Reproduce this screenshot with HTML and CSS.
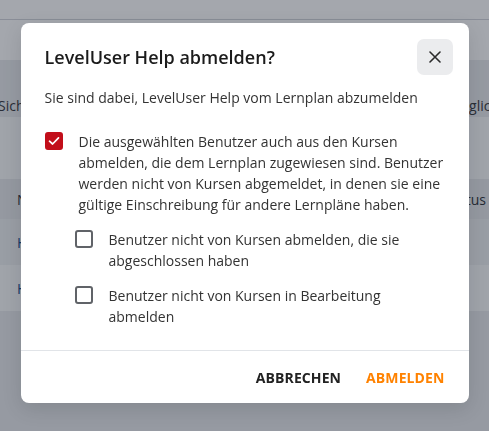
FILE: index.html
```html
<!DOCTYPE html>
<html lang="de">
<head>
    <meta charset="UTF-8" />
    <meta name="viewport" content="width=device-width, initial-scale=1.0" />
    <title>Lernplan</title>
    <link rel="stylesheet" href="styles.css">
</head>
<body>
    <div class="page">
        <div class="topbar"></div>
        <div class="spacer"></div>
        <div class="toolbar">
            <span class="toolbar-left">Sichtbarkeit</span>
            <span class="toolbar-right">Nicht möglich</span>
        </div>
        <div class="filters"></div>
        <div class="table-head">
            <span>Name</span>
            <span>Status</span>
        </div>
        <div class="table-row dark"><a href="#">Help Desk</a></div>
        <div class="table-row"><a href="#">Help Center</a></div>
    </div>

    <div class="backdrop">
        <div class="dialog" role="dialog" aria-labelledby="dialogTitle">
            <div class="dialog-header">
                <h2 id="dialogTitle">LevelUser Help abmelden?</h2>
                <button class="close-btn" aria-label="Schließen">
                    <svg width="12" height="12" viewBox="0 0 12 12">
                        <path d="M1 1 L11 11 M11 1 L1 11" stroke="#2b2b2b" stroke-width="1.6" stroke-linecap="round" />
                    </svg>
                </button>
            </div>
            <div class="dialog-body">
                <p class="intro">Sie sind dabei, LevelUser Help vom Lernplan abzumelden</p>

                <label class="option">
                    <span class="box checked">
                        <svg width="12" height="10" viewBox="0 0 12 10">
                            <path d="M1.5 5.2 L4.6 8 L10.5 1.8" fill="none" stroke="#fff" stroke-width="1.7" stroke-linecap="round" stroke-linejoin="round" />
                        </svg>
                    </span>
                    <span>Die ausgewählten Benutzer auch aus den Kursen abmelden, die dem Lernplan zugewiesen sind. Benutzer werden nicht von Kursen abgemeldet, in denen sie eine gültige Einschreibung für andere Lernpläne haben.</span>
                </label>

                <label class="option sub">
                    <span class="box"></span>
                    <span>Benutzer nicht von Kursen abmelden, die sie abgeschlossen haben</span>
                </label>

                <label class="option sub">
                    <span class="box"></span>
                    <span>Benutzer nicht von Kursen in Bearbeitung abmelden</span>
                </label>
            </div>
            <div class="dialog-footer">
                <button class="text-btn">Abbrechen</button>
                <button class="text-btn primary">Abmelden</button>
            </div>
        </div>
    </div>
</body>
</html>
```

FILE: styles.css
```css
* {
    margin: 0;
    padding: 0;
    box-sizing: border-box;
    font-family: 'Open Sans', 'Liberation Sans', sans-serif;
}

body {
    background: #e8eaed;
    color: #333;
    font-size: 14px;
    overflow: hidden;
    height: 431px;
}

/* page behind the dialog */
.topbar {
    height: 20px;
    background: #fff;
    border-bottom: 1px solid #d3d6db;
}

.spacer {
    height: 40px;
    background: #fff;
}

.toolbar {
    height: 57px;
    background: #e9ebee;
    display: flex;
    justify-content: space-between;
    align-items: flex-end;
    padding-bottom: 1px;
    line-height: 21px;
    color: #3a3d42;
}

.toolbar-left {
    margin-left: -2px;
}

.toolbar-right {
    margin-right: -10px;
}

.filters {
    height: 62px;
    background: #f9fafb;
}

.table-head {
    height: 40px;
    background: #e7e9ec;
    display: flex;
    justify-content: space-between;
    align-items: center;
    padding: 0 3px 0 17px;
    color: #34373d;
}

.table-row {
    height: 46px;
    background: #f9fafb;
    display: flex;
    align-items: center;
    padding-left: 17px;
}

.table-row.dark {
    background: #eef0f2;
}

.table-row a {
    color: #1d4f8c;
    text-decoration: none;
}

/* dialog */
.backdrop {
    position: fixed;
    inset: 0;
    background: rgba(17, 24, 39, 0.38);
    display: flex;
    justify-content: center;
    align-items: flex-start;
    padding-top: 23px;
}

.dialog {
    width: 448px;
    background: #fff;
    border-radius: 8px;
    box-shadow: 0 6px 20px rgba(0, 0, 0, 0.12);
}

.dialog-header {
    display: flex;
    justify-content: space-between;
    align-items: center;
    padding: 16px 16px 0 24px;
}

.dialog-header h2 {
    font-size: 18px;
    font-weight: 600;
    color: #1b1b1b;
    line-height: 27px;
}

.close-btn {
    width: 36px;
    height: 36px;
    border: none;
    border-radius: 7px;
    background: #ebecee;
    display: flex;
    align-items: center;
    justify-content: center;
    cursor: pointer;
}

.dialog-body {
    padding: 12px 24px 23px 24px;
    line-height: 21px;
}

.intro {
    margin-bottom: 23px;
}

.option {
    display: flex;
    align-items: flex-start;
    gap: 16px;
    margin-bottom: 14px;
}

.option:last-child {
    margin-bottom: 0;
}

.option.sub {
    padding-left: 30px;
}

.box {
    flex: none;
    width: 18px;
    height: 18px;
    margin-top: 1px;
    border: 2px solid #606368;
    border-radius: 3px;
    display: flex;
    align-items: center;
    justify-content: center;
}

.box.checked {
    background: #c20e1a;
    border-color: #c20e1a;
}

.dialog-footer {
    border-top: 1px solid #e1e4e8;
    height: 53px;
    display: flex;
    justify-content: flex-end;
    align-items: center;
    gap: 9px;
    padding: 0 16px;
}

.text-btn {
    background: none;
    border: none;
    padding: 6px 8px;
    font-size: 14px;
    font-weight: 700;
    text-transform: uppercase;
    letter-spacing: 0.1px;
    color: #222;
    cursor: pointer;
}

.text-btn.primary {
    color: #ff8200;
}
```
